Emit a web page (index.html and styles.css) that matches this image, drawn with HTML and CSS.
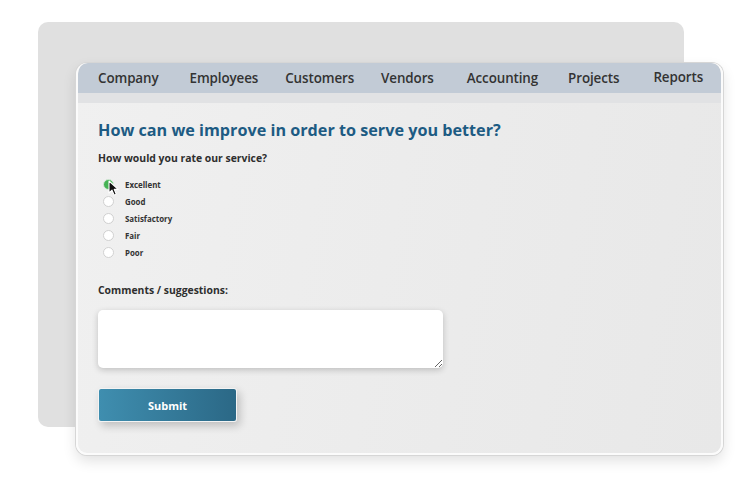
FILE: index.html
```html
<!DOCTYPE html>
<html lang="en">
<head>
    <meta charset="UTF-8">
    <title>Feedback</title>
    <link rel="stylesheet" href="styles.css">
</head>
<body>
<div class="stage">
    <div class="back-card"></div>

    <div class="window">
        <nav class="nav">
            <a href="#">Company</a>
            <a href="#">Employees</a>
            <a href="#">Customers</a>
            <a href="#">Vendors</a>
            <a href="#">Accounting</a>
            <a href="#">Projects</a>
            <a href="#" class="raised">Reports</a>
        </nav>
        <div class="strip"></div>

        <form class="survey">
            <h1>How can we improve in order to serve you better?</h1>
            <p class="question">How would you rate our service?</p>

            <div class="options">
                <label class="option"><input type="radio" name="rate" checked><span>Excellent</span></label>
                <label class="option"><input type="radio" name="rate"><span>Good</span></label>
                <label class="option"><input type="radio" name="rate"><span>Satisfactory</span></label>
                <label class="option"><input type="radio" name="rate"><span>Fair</span></label>
                <label class="option"><input type="radio" name="rate"><span>Poor</span></label>

                <!-- mouse pointer over the first radio -->
                <svg class="cursor" width="12" height="17" viewBox="0 0 12 17">
                    <path d="M1 1 L1 13 L4 10.2 L6.2 15.2 L8.3 14.3 L6.2 9.4 L10.2 9.4 Z" fill="#111" stroke="#fff" stroke-width="1.1" stroke-linejoin="round"/>
                </svg>
            </div>

            <p class="question comments-label">Comments / suggestions:</p>
            <textarea class="comments"></textarea>

            <button type="button" class="submit">Submit</button>
        </form>
    </div>
</div>
</body>
</html>
```

FILE: styles.css
```css
body {
    margin: 0;
    background: #fff;
    font-family: "Open Sans", "Noto Sans", sans-serif;
    color: #333;
}
.stage {
    position: relative;
    width: 750px;
    height: 492px;
    padding: 63px 0 0 76px;
    box-sizing: border-box;
}
.back-card {
    position: absolute;
    left: 38px;
    top: 22px;
    width: 646px;
    height: 405px;
    background: #e0e0e0;
    border-radius: 10px;
}
.window {
    position: relative;
    width: 647px;
    height: 392px;
    box-sizing: border-box;
    border: 2px solid #fbfbfb;
    border-top: none;
    border-radius: 11px;
    background: linear-gradient(100deg, #f0f0f0 0%, #ebebeb 60%, #e8e8e8 100%);
    box-shadow: 0 0 0 1px #d6d6d6, 0 6px 14px rgba(0, 0, 0, 0.12);
    overflow: hidden;
}
.nav {
    display: flex;
    align-items: center;
    height: 30px;
    padding: 0 0 0 20px;
    background: #c2cbd6;
    border-radius: 10px 10px 0 0;
}
.nav a {
    font-size: 13.4px;
    font-weight: 600;
    color: #333;
    text-decoration: none;
    letter-spacing: -0.1px;
    white-space: nowrap;
}
.nav a:nth-child(1) { margin-right: 31px; }
.nav a:nth-child(2) { margin-right: 27px; }
.nav a:nth-child(3) { margin-right: 27px; }
.nav a:nth-child(4) { margin-right: 33px; }
.nav a:nth-child(5) { margin-right: 30px; }
.nav a:nth-child(6) { margin-right: 34px; }
.nav a.raised {
    margin-top: -2px;
}
.strip {
    height: 10px;
    background: #e1e2e4;
}
.survey {
    padding: 15px 20px 0 20px;
}
h1 {
    margin: 0;
    font-size: 16.2px;
    font-weight: 700;
    color: #1d5b83;
    line-height: 24px;
}
.question {
    margin: 9px 0 0 0;
    font-size: 10.4px;
    font-weight: 700;
    line-height: 14px;
    color: #2e2e2e;
}
.options {
    position: relative;
    margin-top: 14px;
    display: flex;
    flex-direction: column;
    gap: 6px;
}
.option {
    display: flex;
    align-items: center;
    height: 11px;
    font-size: 7.9px;
    font-weight: 700;
    color: #333;
}
.option input {
    appearance: none;
    margin: 0 11px 0 5px;
    width: 11px;
    height: 11px;
    border-radius: 50%;
    background: #fff;
    border: 1px solid #d0d0d0;
    box-sizing: border-box;
}
.option input:checked {
    background: #45b354;
    border: 1.5px solid #d8e8da;
}
.cursor {
    position: absolute;
    left: 10px;
    top: 1px;
}
.comments-label {
    margin-top: 25px;
}
.comments {
    display: block;
    margin-top: 13px;
    width: 345px;
    height: 58px;
    box-sizing: border-box;
    border: none;
    border-radius: 5px;
    background: #fff;
    box-shadow: 0 2px 6px rgba(0, 0, 0, 0.2);
    resize: vertical;
    outline: none;
}
.submit {
    display: block;
    margin-top: 20px;
    width: 139px;
    height: 34px;
    border: 1px solid #f4f4f4;
    border-radius: 3px;
    background: linear-gradient(90deg, #3f8eaf 0%, #2b6886 100%);
    color: #fff;
    font-family: "Open Sans", "Noto Sans", sans-serif;
    font-size: 11px;
    font-weight: 700;
    box-shadow: 3px 4px 8px rgba(0, 0, 0, 0.2);
    cursor: pointer;
}
```
